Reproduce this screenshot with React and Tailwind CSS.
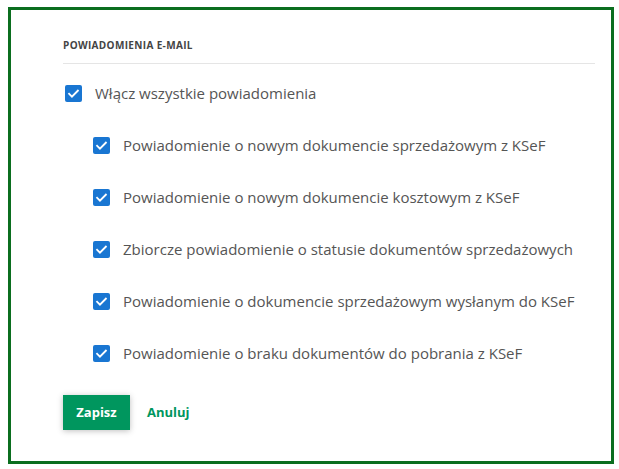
const items = [
  'Powiadomienie o nowym dokumencie sprzedażowym z KSeF',
  'Powiadomienie o nowym dokumencie kosztowym z KSeF',
  'Zbiorcze powiadomienie o statusie dokumentów sprzedażowych',
  'Powiadomienie o dokumencie sprzedażowym wysłanym do KSeF',
  'Powiadomienie o braku dokumentów do pobrania z KSeF',
]

function Check() {
  return (
    <span className="flex h-[17px] w-[17px] shrink-0 items-center justify-center rounded-[2px] bg-[#1976d2]">
      <svg viewBox="0 0 24 24" className="h-[15px] w-[15px]" fill="none" aria-hidden="true">
        <path d="M5 12.5l4.5 4.5L19 7.5" stroke="white" strokeWidth="3" strokeLinecap="square" />
      </svg>
    </span>
  )
}

function Row({ label, nested }) {
  return (
    <label className={`flex h-[52px] items-center gap-[13px] ${nested ? 'pl-[30px]' : 'pl-[2px]'}`}>
      <Check />
      <span className="text-[15px] font-medium text-[#555]">{label}</span>
    </label>
  )
}

export default function App() {
  return (
    <div className="pl-[8px] pt-[7px] font-['Open_Sans',sans-serif]">
      <div className="h-[457px] w-[606px] border-[3px] border-[#0b6e1f] bg-white pl-[52px] pr-[16px]">
        <div className="pt-[28px] pb-[10px] text-[10px] font-bold uppercase tracking-[0.35px] text-[#444] border-b border-[#e5e5e5]">
          Powiadomienia e-mail
        </div>
        <div className="pt-[3px]">
          <Row label="Włącz wszystkie powiadomienia" />
          {items.map((t) => (
            <Row key={t} label={t} nested />
          ))}
        </div>
        <div className="mt-[16px] flex items-center gap-[17px]">
          <button
            type="button"
            className="h-[35px] w-[67px] bg-[#00965e] text-[13px] font-bold text-white shadow-[0_1px_6px_rgba(0,0,0,0.25)]"
          >
            Zapisz
          </button>
          <button type="button" className="text-[13px] font-bold text-[#00965e]">
            Anuluj
          </button>
        </div>
      </div>
    </div>
  )
}
